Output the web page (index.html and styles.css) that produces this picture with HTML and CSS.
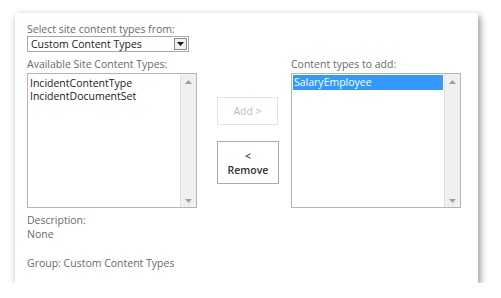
FILE: index.html
```html
<!DOCTYPE html>
<html>
<head>
<meta charset="utf-8">
<link rel="stylesheet" href="styles.css">
</head>
<body>
<div class="frame">
  <div class="card">
    <div class="label">Select site content types from:</div>
    <div class="select">
      <span class="select-text">Custom Content Types</span>
      <span class="select-btn"><svg width="7" height="4" viewBox="0 0 7 4"><path d="M0 0H7L3.5 4Z" fill="#111"/></svg></span>
    </div>
    <div class="columns">
      <div class="col">
        <div class="label">Available Site Content Types:</div>
        <div class="listbox">
          <div class="items plain">
            <div class="item">IncidentContentType</div>
            <div class="item">IncidentDocumentSet</div>
          </div>
          <div class="scroll">
            <svg width="7" height="4" viewBox="0 0 7 4"><path d="M0 4H7L3.5 0Z" fill="#a0a0a0"/></svg>
            <svg width="7" height="4" viewBox="0 0 7 4"><path d="M0 0H7L3.5 4Z" fill="#a0a0a0"/></svg>
          </div>
        </div>
      </div>
      <div class="buttons">
        <div class="btn disabled">Add &gt;</div>
        <div class="btn remove"><span>&lt;</span><span>Remove</span></div>
      </div>
      <div class="col">
        <div class="label">Content types to add:</div>
        <div class="listbox">
          <div class="items">
            <div class="item selected">SalaryEmployee</div>
          </div>
          <div class="scroll">
            <svg width="7" height="4" viewBox="0 0 7 4"><path d="M0 4H7L3.5 0Z" fill="#a0a0a0"/></svg>
            <svg width="7" height="4" viewBox="0 0 7 4"><path d="M0 0H7L3.5 4Z" fill="#a0a0a0"/></svg>
          </div>
        </div>
      </div>
    </div>
    <div class="desc">
      <div class="label">Description:</div>
      <div class="label">None</div>
    </div>
    <div class="label group">Group: Custom Content Types</div>
  </div>
</div>
</body>
</html>
```
FILE: styles.css
```css
html, body {
  margin: 0;
  padding: 0;
  background: #fff;
  font-family: "Open Sans", "Noto Sans", sans-serif;
  font-size: 10.5px;
}
.frame {
  padding: 13px 0 0 15px;
}
.card {
  box-sizing: border-box;
  width: 463px;
  height: 270px;
  background: #fff;
  box-shadow: 2px 3px 7px rgba(0, 0, 0, 0.45);
  padding: 9px 12px 0 12px;
}
.label {
  color: #6a6a6a;
  line-height: 14px;
  white-space: nowrap;
}
.select {
  box-sizing: border-box;
  width: 162px;
  height: 16px;
  border: 1px solid #a8a8a8;
  display: flex;
  align-items: center;
  justify-content: space-between;
}
.select-text {
  color: #222;
  padding-left: 3px;
  line-height: 14px;
}
.select-btn {
  box-sizing: border-box;
  width: 13px;
  height: 12px;
  margin-right: 1px;
  border: 1px solid #8a8a8a;
  background: #f0f0f0;
  display: flex;
  align-items: center;
  justify-content: center;
}
.columns {
  display: flex;
  margin-top: 5px;
}
.col {
  width: 170px;
}
.listbox {
  box-sizing: border-box;
  width: 170px;
  height: 135px;
  margin-top: 2px;
  border: 1px solid #b5b5b5;
  display: flex;
}
.items {
  flex: 1;
  padding: 1px 1px 0 1px;
}
.items.plain {
  padding-top: 3px;
}
.item {
  color: #1a1a1a;
  line-height: 13px;
  padding-left: 1px;
  white-space: nowrap;
}
.item.selected {
  background: #3399ff;
  color: #fff;
  line-height: 15px;
}
.scroll {
  width: 15px;
  background: #f0f0f0;
  border-left: 1px solid #e2e2e2;
  display: flex;
  flex-direction: column;
  justify-content: space-between;
  align-items: center;
  padding: 6px 0 4px 0;
}
.buttons {
  width: 62px;
  margin: 40px 12px 0 20px;
  display: flex;
  flex-direction: column;
  gap: 16px;
}
.btn {
  box-sizing: border-box;
  width: 61px;
  border: 1px solid #ababab;
  display: flex;
  flex-direction: column;
  align-items: center;
  justify-content: center;
  color: #333;
  line-height: 14px;
}
.btn.disabled {
  height: 28px;
  border-color: #e3e3e3;
  color: #bdbdbd;
}
.btn.remove {
  height: 43px;
  width: 62px;
  font-weight: 600;
}
.desc {
  margin-top: 5px;
}
.group {
  margin-top: 15px;
}
```
